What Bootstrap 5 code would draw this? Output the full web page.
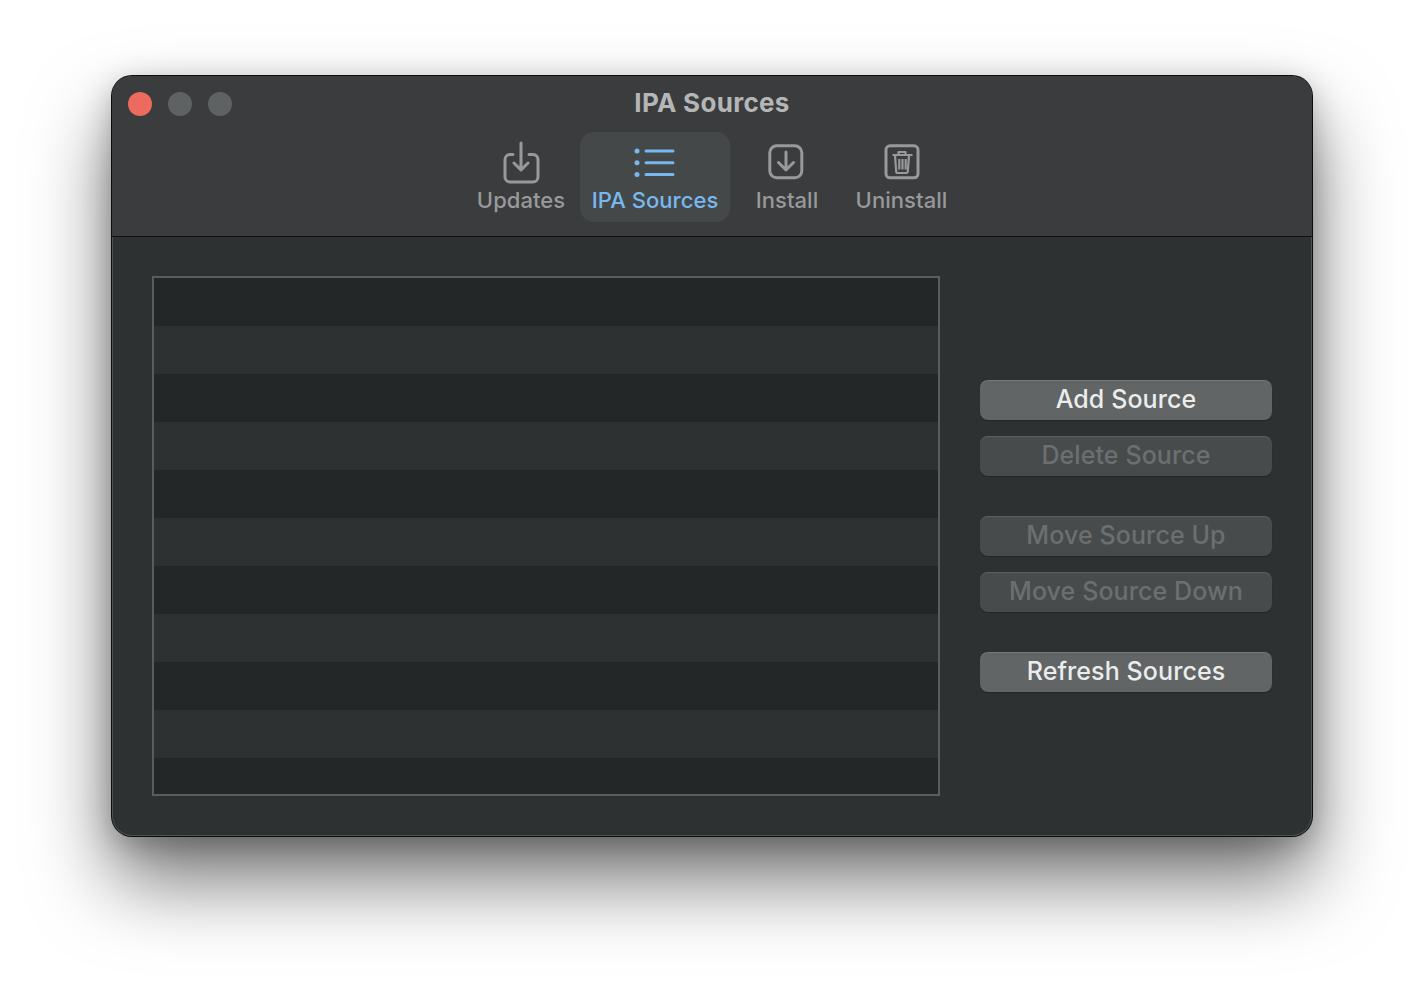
<!DOCTYPE html>
<html lang="en">
<head>
<meta charset="utf-8">
<title>IPA Sources</title>
<link href="https://cdn.jsdelivr.net/npm/bootstrap@5.3.0/dist/css/bootstrap.min.css" rel="stylesheet">
<style>
html,body{height:100%}
body{background:#fff;font-family:Inter,"Liberation Sans",sans-serif;overflow:hidden}
.stage{padding-top:76px}
.win{width:1200px;height:760px;border-radius:20px;background:#2d3132;box-shadow:inset 0 0 0 1px rgba(255,255,255,.16),0 0 0 1px #0c0c0c,0 44px 80px rgba(0,0,0,.55),0 8px 30px rgba(0,0,0,.25);overflow:hidden}
.bar{height:161px;background:#3b3c3e;border-bottom:1px solid #0f1111}
.toprow{height:56px;display:grid;grid-template-columns:1fr auto 1fr;align-items:center}
.lights{padding-left:16px;gap:16px}
.light{width:24px;height:24px;border-radius:50%;background:#5f6263}
.light-red{background:#ed6a5e}
.wintitle{font-size:26px;font-weight:650;letter-spacing:.3px;color:#b5b6b7;line-height:1;margin-bottom:2px}
.tool{height:90px;padding-top:6px;color:#98999a;border-radius:14px}
.tool svg{display:block;height:50px;width:50px}
.tool-label{font-size:22px;font-weight:450;letter-spacing:.05px;line-height:24px;white-space:nowrap}
.w-up{width:112px;margin-right:3px}
.w-ipa{width:150px;margin-right:14px;background:#454849;color:#78b8f0}
.w-ins{width:86px;margin-right:14px}
.w-un{width:115px}
.body{height:599px;padding:39px 40px 40px}
.srclist{width:788px;height:520px;border:2px solid #5a5d5e}
.srcrow{height:48px;flex:none;background:#2d3132}
.srcrow:nth-child(odd){background:#232727}
.side{width:292px}
.mbtn{height:40px;width:100%;padding:0 0 2px;border:0;border-radius:8px;font-size:25px;font-weight:450;letter-spacing:.1px;line-height:36px;background:#626566;color:#ebecec;box-shadow:inset 0 1px 0 rgba(255,255,255,.12),0 1px 1px rgba(0,0,0,.25)}
.mbtn:hover,.mbtn:active{background:#626566;color:#ebecec}
.mbtn:disabled{opacity:1;background:#484b4c;color:#6c6f70;border:0}
.gp-s{margin-top:16px}
.gp-l{margin-top:40px}
</style>
</head>
<body>
<div class="stage d-flex justify-content-center">
  <div class="win d-flex flex-column">
    <div class="bar">
      <div class="toprow">
        <div class="lights d-flex">
          <span class="light light-red"></span><span class="light"></span><span class="light"></span>
        </div>
        <div class="wintitle">IPA Sources</div>
        <div></div>
      </div>
      <div class="d-flex justify-content-center">
        <div class="tool w-up d-flex flex-column align-items-center">
          <svg viewBox="0 0 50 50" fill="none" stroke="currentColor" stroke-width="3" stroke-linecap="round" stroke-linejoin="round"><path d="M17 16.500H14a5 5 0 0 0-5 5V39a5 5 0 0 0 5 5H37a5 5 0 0 0 5-5V21.500a5 5 0 0 0-5-5H33M25 5V32M18 25l7 7 7-7"/></svg>
          <div class="tool-label">Updates</div>
        </div>
        <div class="tool w-ipa d-flex flex-column align-items-center">
          <svg viewBox="0 0 50 50" fill="none" stroke="currentColor" stroke-width="3" stroke-linecap="round"><path d="M16 13H43M16 24.700H43M16 36.500H43"/><g fill="currentColor" stroke="none"><circle cx="7" cy="13" r="2.500"/><circle cx="7" cy="24.700" r="2.500"/><circle cx="7" cy="36.500" r="2.500"/></g></svg>
          <div class="tool-label">IPA Sources</div>
        </div>
        <div class="tool w-ins d-flex flex-column align-items-center">
          <svg viewBox="0 0 50 50" fill="none" stroke="currentColor" stroke-width="3" stroke-linecap="round" stroke-linejoin="round"><rect x="7.800" y="7.800" width="32" height="32" rx="7"/><path d="M24 14V32M16.500 24.500l7.500 7.500 7.500-7.500"/></svg>
          <div class="tool-label">Install</div>
        </div>
        <div class="tool w-un d-flex flex-column align-items-center">
          <svg viewBox="0 0 50 50" fill="none" stroke="currentColor" stroke-width="3" stroke-linejoin="round"><rect x="9" y="7.800" width="32" height="32" rx="4"/><path stroke-width="2.200" d="M15.500 17H35.500M21.500 17V14h7v3M18 17.500l1.200 16a1.500 1.500 0 0 0 1.500 1.500h8.600a1.500 1.500 0 0 0 1.500-1.500L32 17.500M22.300 21V31.500M25.500 21V31.500M28.700 21V31.500"/></svg>
          <div class="tool-label">Uninstall</div>
        </div>
      </div>
    </div>
    <div class="body d-flex justify-content-between">
      <div class="srclist d-flex flex-column overflow-hidden">
        <div class="srcrow"></div><div class="srcrow"></div><div class="srcrow"></div><div class="srcrow"></div><div class="srcrow"></div><div class="srcrow"></div><div class="srcrow"></div><div class="srcrow"></div><div class="srcrow"></div><div class="srcrow"></div><div class="srcrow"></div>
      </div>
      <div class="side d-flex flex-column justify-content-center">
        <button type="button" class="btn mbtn">Add Source</button>
        <button type="button" class="btn mbtn gp-s" disabled>Delete Source</button>
        <button type="button" class="btn mbtn gp-l" disabled>Move Source Up</button>
        <button type="button" class="btn mbtn gp-s" disabled>Move Source Down</button>
        <button type="button" class="btn mbtn gp-l">Refresh Sources</button>
      </div>
    </div>
  </div>
</div>
<script src="https://cdn.jsdelivr.net/npm/bootstrap@5.3.0/dist/js/bootstrap.bundle.min.js"></script>
</body>
</html>
